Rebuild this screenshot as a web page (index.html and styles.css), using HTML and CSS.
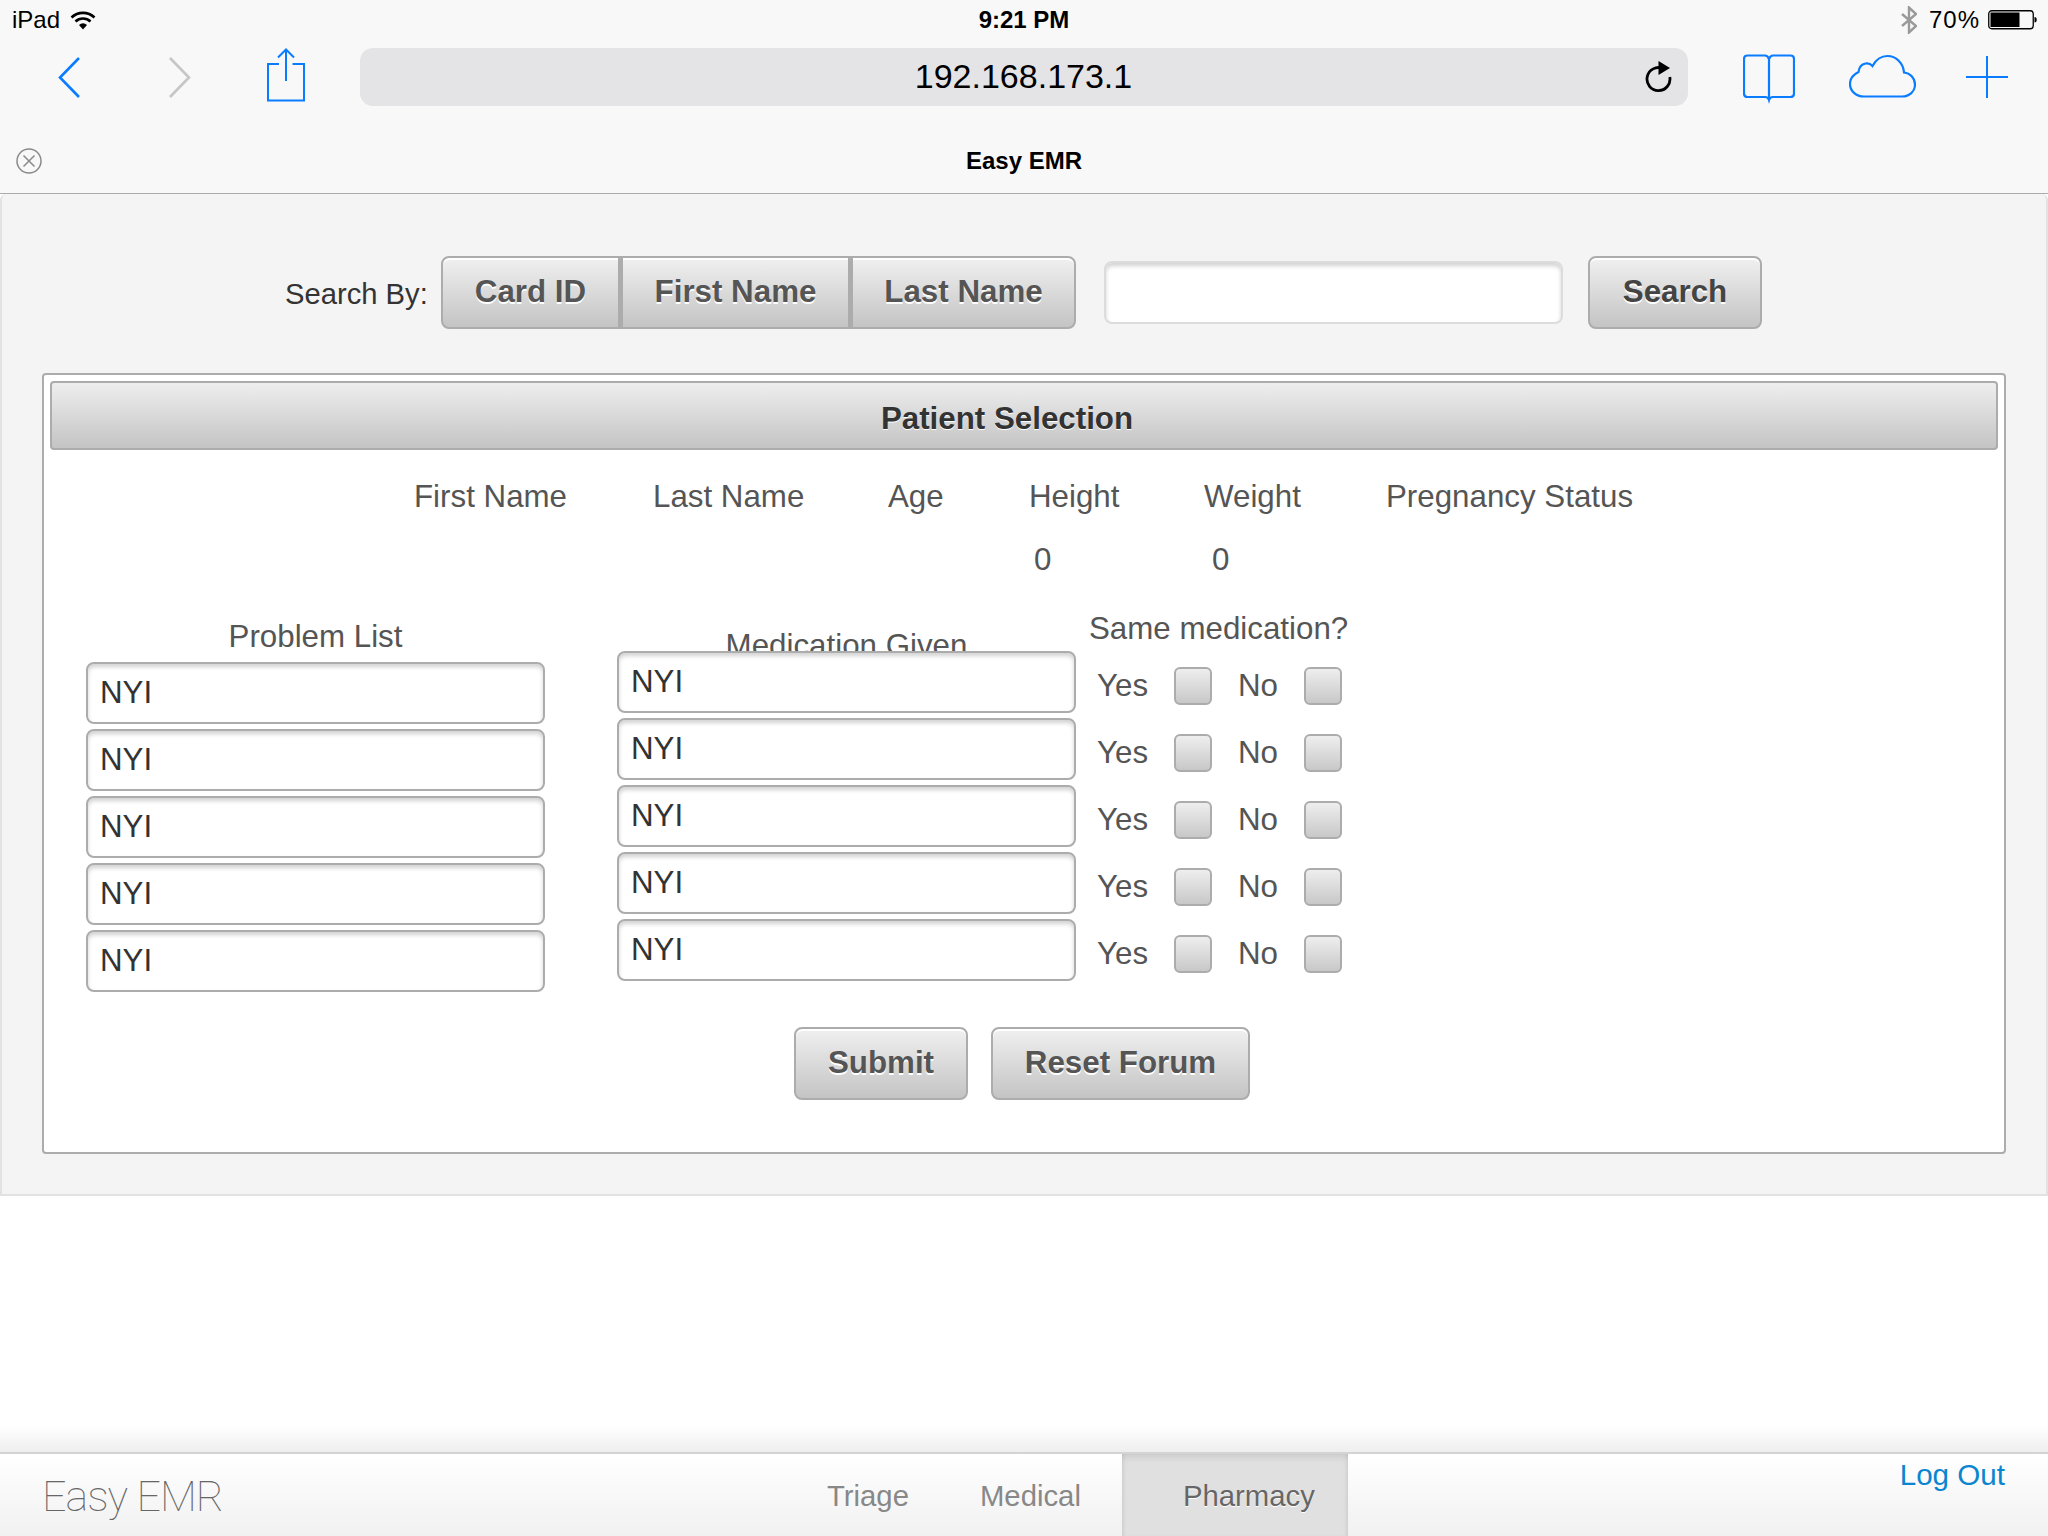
FILE: index.html
```html
<!DOCTYPE html>
<html lang="en">
<head>
  <meta charset="UTF-8" />
  <title>Easy EMR</title>
  <link rel="stylesheet" href="styles.css">
</head>
<body>
  <div class="chrome">
    <div class="status">
      <div class="status-left">
        <span>iPad</span>
        <svg class="wifi" width="26" height="20" viewBox="0 0 26 20" fill="none" stroke="#000" stroke-width="2.6">
          <path d="M1.5 7.5a16.5 16.5 0 0 1 23 0"/>
          <path d="M5.5 11.5a11 11 0 0 1 15 0"/>
          <path d="M13 19.5l-4-4.6a6 6 0 0 1 8 0z" fill="#000" stroke="none"/>
        </svg>
      </div>
      <div class="status-time">9:21 PM</div>
      <div class="status-right">
        <svg width="16" height="28" viewBox="0 0 16 28" fill="none" stroke="#9a9a9a" stroke-width="2.4">
          <path d="M1 8l14 12-7 6.5V1.5L15 8 1 20"/>
        </svg>
        <span class="pct">70%</span>
        <svg class="battery" width="49" height="20" viewBox="0 0 49 20">
          <rect x="0.75" y="0.75" width="44.5" height="18" rx="3" fill="none" stroke="#000" stroke-width="1.3"/>
          <rect x="2.5" y="2.5" width="29" height="14.5" fill="#000"/>
          <path d="M46.5 7c1.5 0 2.2 1 2.2 2.8s-.7 2.8-2.2 2.8z" fill="#000"/>
        </svg>
      </div>
    </div>

    <div class="toolbar">
      <svg class="ico-back" width="22" height="58" viewBox="0 0 22 58" fill="none" stroke="#0a7cff" stroke-width="2.6"><path d="M21 10L2 29.5 21 49"/></svg>
      <svg class="ico-fwd" width="22" height="58" viewBox="0 0 22 58" fill="none" stroke="#c6c6c6" stroke-width="2.6"><path d="M1 10l19 19.5L1 49"/></svg>
      <svg class="ico-share" width="38" height="58" viewBox="0 0 38 58" fill="none" stroke="#0a7cff" stroke-width="2"><path d="M12 16H1v36.500h36V16H25.500M19 33V1.500M11 9.500l8-8 8 8"/></svg>
      <div class="url-bar">
        <span class="url-text">192.168.173.1</span>
        <svg class="ico-reload" width="28" height="32" viewBox="0 0 28 32" fill="none">
          <path d="M19 7.500A11.500 11.500 0 1 0 25.800 16" stroke="#000" stroke-width="2.8"/>
          <path d="M14.500 0l11.500 7-11.500 7z" fill="#000"/>
        </svg>
      </div>
      <svg class="ico-book" width="52" height="58" viewBox="0 0 52 58" fill="none" stroke="#0a7cff" stroke-width="2.200"><path d="M26 52V11c-1-2.600-2.500-3.500-4-3.500H4.500Q1 7.500 1 11v34.500Q1 49 4.500 49H22c2 0 3.500 1.200 4 3 .5-1.800 2-3 4-3h17.500q3.500 0 3.500-3.500V11q0-3.500-3.500-3.500H30c-1.500 0-3 .9-4 3.500"/></svg>
      <svg class="ico-cloud" width="67" height="58" viewBox="0 0 67 58" fill="none" stroke="#0a7cff" stroke-width="2.200"><path d="M15 48.500H53c7.500 0 13-5 13-12 0-6.500-5-11.500-11-12-.7-9.500-8-16.500-16.500-16.500-7 0-11.700 3.800-15 10-2-2.200-4.500-3-7-2.500-4 .8-6.500 4-7 8.500C4.500 26.500 1 31 1 36c0 7 6 12.500 14 12.500z"/></svg>
      <svg class="ico-plus" width="42" height="58" viewBox="0 0 42 58" fill="none" stroke="#0a7cff" stroke-width="2"><path d="M21 8v42M0 29h42"/></svg>
    </div>

    <div class="tab-title">
      <svg width="26" height="26" viewBox="0 0 26 26" fill="none" stroke="#8a8a8a" stroke-width="1.500"><circle cx="13" cy="13" r="12"/><path d="M7.500 7.500l11 11M18.500 7.500l-11 11"/></svg>
      <span class="tab-name">Easy EMR</span>
    </div>
  </div>

  <div class="panel">
    <div class="search-row">
      <span class="search-label">Search By:</span>
      <div class="seg">
        <button class="btn seg-first w-card">Card ID</button>
        <button class="btn seg-mid w-first">First Name</button>
        <button class="btn seg-last w-last">Last Name</button>
      </div>
      <input class="field search-input" type="text">
      <button class="btn search-btn">Search</button>
    </div>

    <div class="box">
      <div class="box-head">Patient Selection</div>

      <div class="info">
        <span>First Name</span><span>Last Name</span><span>Age</span><span>Height</span><span>Weight</span><span>Pregnancy Status</span>
        <span></span><span></span><span></span><span class="val-h">0</span><span class="val-w">0</span><span></span>
      </div>

      <div class="lists">
        <div class="col col-problem">
          <div class="col-title">Problem List</div>
          <input class="field" type="text" value="NYI">
          <input class="field" type="text" value="NYI">
          <input class="field" type="text" value="NYI">
          <input class="field" type="text" value="NYI">
          <input class="field" type="text" value="NYI">
        </div>
        <div class="col col-med">
          <div class="col-title">Medication Given</div>
          <input class="field" type="text" value="NYI">
          <input class="field" type="text" value="NYI">
          <input class="field" type="text" value="NYI">
          <input class="field" type="text" value="NYI">
          <input class="field" type="text" value="NYI">
        </div>
        <div class="col-same">
          <div class="same-title">Same medication?</div>
          <div class="same-row"><span class="yes">Yes</span><input class="check" type="checkbox"><span class="no">No</span><input class="check" type="checkbox"></div>
          <div class="same-row"><span class="yes">Yes</span><input class="check" type="checkbox"><span class="no">No</span><input class="check" type="checkbox"></div>
          <div class="same-row"><span class="yes">Yes</span><input class="check" type="checkbox"><span class="no">No</span><input class="check" type="checkbox"></div>
          <div class="same-row"><span class="yes">Yes</span><input class="check" type="checkbox"><span class="no">No</span><input class="check" type="checkbox"></div>
          <div class="same-row"><span class="yes">Yes</span><input class="check" type="checkbox"><span class="no">No</span><input class="check" type="checkbox"></div>
        </div>
      </div>

      <div class="actions">
        <button class="btn w-submit">Submit</button>
        <button class="btn w-reset">Reset Forum</button>
      </div>
    </div>
  </div>

  <div class="spacer"></div>

  <div class="footer">
    <span class="brand">Easy EMR</span>
    <a class="tab tab-triage">Triage</a>
    <a class="tab tab-medical">Medical</a>
    <a class="tab tab-pharmacy">Pharmacy</a>
    <a class="logout">Log Out</a>
  </div>
</body>
</html>
```

FILE: styles.css
```css
html, body {
  height: 100%;
}
body {
  margin: 0;
  width: 2048px;
  height: 1536px;
  display: flex;
  flex-direction: column;
  overflow: hidden;
  background: #fff;
  font-family: "Liberation Sans", Arial, sans-serif;
  font-size: 31.3px;
  color: #444;
}

/* browser chrome */
.chrome {
  background: #f8f8f8;
  border-bottom: 1px solid #aaa;
  color: #000;
}
.status {
  height: 40px;
  display: grid;
  grid-template-columns: 1fr auto 1fr;
  align-items: center;
  font-size: 24px;
}
.status-left {
  display: flex;
  align-items: center;
  padding-left: 12px;
  gap: 10px;
}
.status-time {
  font-weight: bold;
}
.status-right {
  display: flex;
  align-items: center;
  justify-content: flex-end;
  padding-right: 11px;
}
.pct {
  margin-left: 12px;
  letter-spacing: 1px;
}
.battery {
  margin-left: 8px;
}
.toolbar {
  margin-top: 8px;
  height: 58px;
  display: flex;
  align-items: center;
}
.ico-back { margin-left: 58px; }
.ico-fwd { margin-left: 89px; }
.ico-share { margin-left: 76px; }
.url-bar {
  margin-left: 55px;
  width: 1328px;
  height: 58px;
  border-radius: 13px;
  background: #e4e4e6;
  display: grid;
  grid-template-columns: 1fr auto 1fr;
  align-items: center;
}
.url-text {
  grid-column: 2;
  font-size: 34px;
  margin: 0 0 2px -1px;
}
.ico-reload {
  justify-self: end;
  margin-right: 16px;
}
.ico-book { margin-left: 55px; }
.ico-cloud { margin-left: 54px; }
.ico-plus { margin-left: 50px; }
.tab-title {
  margin-top: 23px;
  height: 64px;
  display: grid;
  grid-template-columns: 1fr auto 1fr;
  align-items: center;
  padding-left: 16px;
  padding-right: 16px;
  font-size: 24px;
  font-weight: bold;
}

/* page */
.panel {
  height: 1002px;
  box-sizing: border-box;
  background: #f4f4f4;
  border: 2px solid #e2e2e2;
  border-top: none;
  border-radius: 6px 6px 0 0;
  padding: 62px 40px 0;
}
.search-row {
  display: flex;
  align-items: center;
  height: 72px;
  padding-left: 243px;
}
.search-label {
  width: 156px;
  font-size: 29.2px;
  color: #333;
  margin-top: 5px;
}
.seg {
  display: flex;
}
.btn {
  box-sizing: border-box;
  height: 73px;
  padding: 0;
  border: 2px solid #acacac;
  border-radius: 8px;
  background: linear-gradient(#f0f0f0, #c4c4c4);
  box-shadow: inset 0 2px 0 #fff;
  font-family: "Liberation Sans", Arial, sans-serif;
  font-size: 31.3px;
  font-weight: bold;
  color: #555;
  text-shadow: 0 2px 0 #fff;
}
.seg-first { border-radius: 8px 0 0 8px; }
.seg-mid { border-radius: 0; border-left: 3px solid #acacac; }
.seg-last { border-radius: 0 8px 8px 0; border-left: 3px solid #acacac; }
.w-card { width: 179px; }
.w-first { width: 230px; }
.w-last { width: 226px; }
.field {
  box-sizing: border-box;
  display: block;
  width: 459px;
  height: 62px;
  padding: 0 0 0 12px;
  border: 2px solid #acacac;
  border-radius: 8px;
  background: #fff;
  box-shadow: inset 0 3px 4px rgba(0, 0, 0, 0.18);
  font-family: "Liberation Sans", Arial, sans-serif;
  font-size: 31.3px;
  color: #333;
}
.search-input {
  margin-left: 28px;
  width: 459px;
  height: 63px;
  border-color: #dcdcdc;
}
.search-btn {
  margin-left: 25px;
  width: 174px;
  color: #444;
}

.box {
  margin-top: 45px;
  width: 1964px;
  height: 781px;
  box-sizing: border-box;
  background: #fff;
  border: 2px solid #acacac;
  border-radius: 4px;
  padding: 6px;
}
.box-head {
  height: 69px;
  box-sizing: border-box;
  line-height: 66px;
  padding: 3px 34px 0 0;
  text-align: center;
  font-weight: bold;
  color: #333;
  background: linear-gradient(#eee, #c4c4c4);
  border: 2px solid #acacac;
  border-radius: 4px;
  text-shadow: 0 1px 0 #fff;
}

.info {
  margin-top: 25px;
  margin-left: 364px;
  display: grid;
  grid-template-columns: 239px 235px 141px 175px 182px auto;
  grid-template-rows: 44px 44px;
  row-gap: 19px;
  line-height: 44px;
  color: #555;
}
.val-h { margin-left: 5px; }
.val-w { margin-left: 8px; }

.lists {
  margin-top: 28px;
  display: flex;
  align-items: flex-start;
}
.col .field {
  margin-bottom: 5px;
}
.col-problem {
  margin-left: 36px;
  padding-top: 8px;
}
.col-title {
  height: 44px;
  line-height: 38px;
  text-align: center;
  color: #555;
}
.col-med {
  margin-left: 72px;
  padding-top: 17px;
}
.col-med .col-title {
  height: 24px;
  overflow: hidden;
}
.col-same {
  margin-left: 13px;
  color: #555;
}
.same-title {
  line-height: 38px;
  margin-bottom: 4px;
}
.same-row {
  height: 67px;
  display: flex;
  align-items: center;
  padding-left: 8px;
}
.yes { width: 77px; }
.no { width: 66px; margin-left: 26px; }
.check {
  appearance: none;
  box-sizing: border-box;
  margin: 0;
  width: 38px;
  height: 38px;
  border: 2px solid #acacac;
  border-radius: 6px;
  background: linear-gradient(#eee, #c8c8c8);
}

.actions {
  margin-top: 30px;
  margin-left: 744px;
  display: flex;
  gap: 23px;
}
.actions .btn {
  padding-bottom: 2px;
}
.w-submit { width: 174px; }
.w-reset { width: 259px; }

/* footer */
.spacer {
  flex: 1;
  background: linear-gradient(#fff 90%, #eee);
}
.footer {
  height: 84px;
  box-sizing: border-box;
  border-top: 2px solid #d4d4d4;
  background: linear-gradient(#fff, #f1f1f1);
  display: flex;
  font-size: 29.3px;
}
.brand {
  width: 785px;
  padding: 2px 0 0 42px;
  align-self: center;
  font-family: Roboto, "Liberation Sans", sans-serif;
  font-weight: 100;
  font-size: 43px;
  letter-spacing: -1px;
  color: #666;
}
.tab {
  display: flex;
  align-items: center;
  padding-top: 2px;
  color: #888;
}
.tab-medical { margin-left: 71px; }
.tab-pharmacy {
  margin-left: 41px;
  padding: 2px 33px 0 61px;
  color: #666;
  background: #e0e0e0;
  box-shadow: inset 0 6px 8px -4px rgba(0, 0, 0, 0.12), inset 4px 0 4px -3px rgba(0, 0, 0, 0.08), inset -4px 0 4px -3px rgba(0, 0, 0, 0.08);
  text-shadow: 0 1px 0 #fff;
}
.logout {
  margin-left: auto;
  padding: 4px 43px 0 0;
  font-size: 29.6px;
  color: #0a85d0;
}
```
